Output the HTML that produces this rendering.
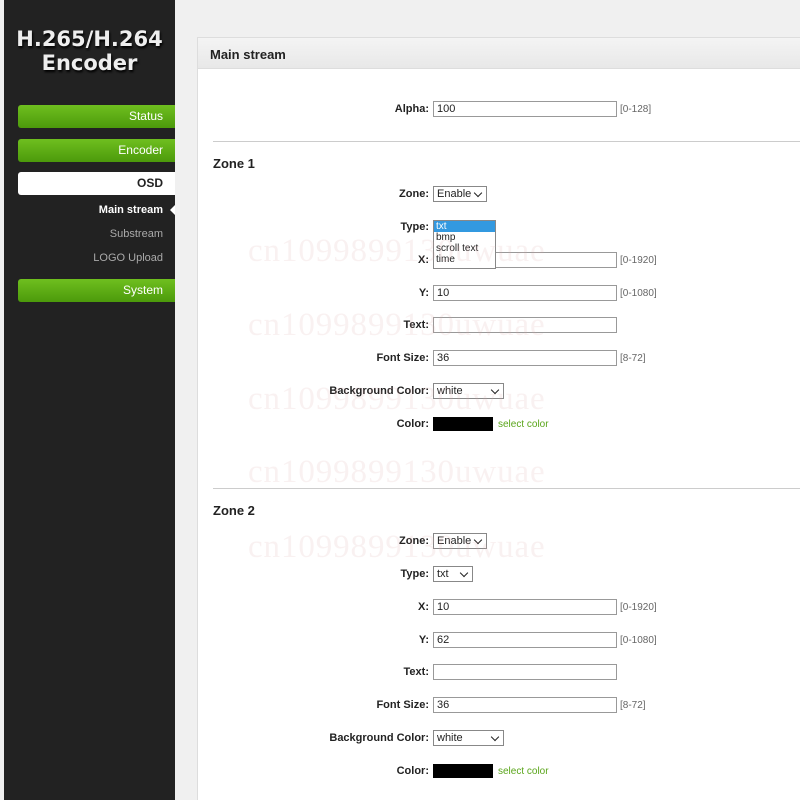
<!DOCTYPE html>
<html><head><meta charset="utf-8"><style>
*{margin:0;padding:0;box-sizing:border-box}
html,body{width:800px;height:800px;overflow:hidden}
body{background:#f0f0f0;font-family:"Liberation Sans",sans-serif;position:relative}
.a{position:absolute}
#side{left:4px;top:0;width:171px;height:800px;background:#222}
.logo{left:4px;width:171px;text-align:center;color:#eee;font-family:"DejaVu Sans",sans-serif;font-weight:bold;font-size:21px;line-height:24px;text-shadow:1px 2px 2px #000}
.btn{left:18px;width:157px;height:23px;border-radius:3px 0 0 3px;background:linear-gradient(#6fbf1f,#4c9a0b);color:#fff;font-size:12px;text-align:right;padding-right:12px;line-height:23px}
.osd{background:#fff;color:#222;font-weight:bold}
.sub{left:18px;width:145px;text-align:right;font-size:11px;color:#aaa}
#panel{left:197px;top:37px;width:610px;height:763px;background:#fff;border:1px solid #ddd;border-bottom:none}
#hdr{left:197px;top:37px;width:610px;height:32px;background:linear-gradient(#f4f4f4,#e8e8e8);border:1px solid #ddd;font-weight:bold;font-size:13px;color:#222;padding:9px 12px}
.hr{left:213px;width:590px;height:1px;background:#ccc}
.h{left:213px;font-weight:bold;font-size:13px;color:#222}
.l{width:200px;left:229px;text-align:right;font-weight:bold;font-size:11px;color:#222}
.i{left:433px;width:184px;height:16px;border:1px solid #999;font-size:11px;padding-left:3px;line-height:14px;color:#222;background:#fff}
.s{left:433px;height:16px;border:1px solid #888;font-size:11px;padding-left:3px;line-height:14px;color:#222;background:#fff}
.s:after{content:"";position:absolute;right:5px;top:3px;width:5px;height:5px;border-right:1.5px solid #222;border-bottom:1.5px solid #222;transform:rotate(45deg)}
.r{left:620px;font-size:10px;color:#666}
.c{left:433px;width:60px;height:14px;background:#000}
.sc{left:498px;font-size:10px;color:#5aa51a}
.wm{left:248px;font-family:"Liberation Serif",serif;font-size:33px;letter-spacing:0.9px;color:rgba(220,170,170,.16)}
</style></head><body>
<div class="a" id="side"></div>
<div class="a logo" style="top:27px">H.265/H.264<br>Encoder</div>
<div class="a btn" style="top:105px">Status</div>
<div class="a btn" style="top:139px">Encoder</div>
<div class="a btn osd" style="top:172px">OSD</div>
<div class="a sub" style="top:204px;color:#fff;font-weight:bold">Main stream</div>
<div class="a" style="left:170px;top:205px;width:0;height:0;border-top:5px solid transparent;border-bottom:5px solid transparent;border-right:5px solid #fff"></div>
<div class="a sub" style="top:228px">Substream</div>
<div class="a sub" style="top:252px">LOGO Upload</div>
<div class="a btn" style="top:279px">System</div>
<div class="a" id="panel"></div>
<div class="a" id="hdr">Main stream</div>

<div class="a l" style="top:103px">Alpha:</div><div class="a i" style="top:101px">100</div><div class="a r" style="top:104px">[0-128]</div>
<div class="a hr" style="top:141px"></div>
<div class="a h" style="top:156px">Zone 1</div>
<div class="a l" style="top:188px">Zone:</div><div class="a s" style="top:186px;width:54px">Enable</div>
<div class="a l" style="top:221px">Type:</div>
<div class="a l" style="top:254px">X:</div><div class="a i" style="top:252px"></div><div class="a r" style="top:255px">[0-1920]</div>
<div class="a" style="left:433px;top:220px;width:63px;height:49px;border:1px solid #888;background:#fff;font-size:10px;line-height:11px;color:#222">
<div style="background:#3399e0;color:#fff;padding-left:2px">txt</div><div style="padding-left:2px">bmp</div><div style="padding-left:2px">scroll text</div><div style="padding-left:2px">time</div></div>
<div class="a l" style="top:287px">Y:</div><div class="a i" style="top:285px">10</div><div class="a r" style="top:288px">[0-1080]</div>
<div class="a l" style="top:319px">Text:</div><div class="a i" style="top:317px"></div>
<div class="a l" style="top:352px">Font Size:</div><div class="a i" style="top:350px">36</div><div class="a r" style="top:353px">[8-72]</div>
<div class="a l" style="top:385px">Background Color:</div><div class="a s" style="top:383px;width:71px">white</div>
<div class="a l" style="top:418px">Color:</div><div class="a c" style="top:417px"></div><div class="a sc" style="top:419px">select color</div>
<div class="a hr" style="top:488px"></div>
<div class="a h" style="top:503px">Zone 2</div>
<div class="a l" style="top:535px">Zone:</div><div class="a s" style="top:533px;width:54px">Enable</div>
<div class="a l" style="top:568px">Type:</div><div class="a s" style="top:566px;width:40px">txt</div>
<div class="a l" style="top:601px">X:</div><div class="a i" style="top:599px">10</div><div class="a r" style="top:602px">[0-1920]</div>
<div class="a l" style="top:634px">Y:</div><div class="a i" style="top:632px">62</div><div class="a r" style="top:635px">[0-1080]</div>
<div class="a l" style="top:666px">Text:</div><div class="a i" style="top:664px"></div>
<div class="a l" style="top:699px">Font Size:</div><div class="a i" style="top:697px">36</div><div class="a r" style="top:700px">[8-72]</div>
<div class="a l" style="top:732px">Background Color:</div><div class="a s" style="top:730px;width:71px">white</div>
<div class="a l" style="top:765px">Color:</div><div class="a c" style="top:764px"></div><div class="a sc" style="top:766px">select color</div>

<div class="a wm" style="top:233px">cn1099899130uwuae</div>
<div class="a wm" style="top:307px">cn1099899130uwuae</div>
<div class="a wm" style="top:381px">cn1099899130uwuae</div>
<div class="a wm" style="top:454px">cn1099899130uwuae</div>
<div class="a wm" style="top:529px">cn1099899130uwuae</div>
</body></html>
